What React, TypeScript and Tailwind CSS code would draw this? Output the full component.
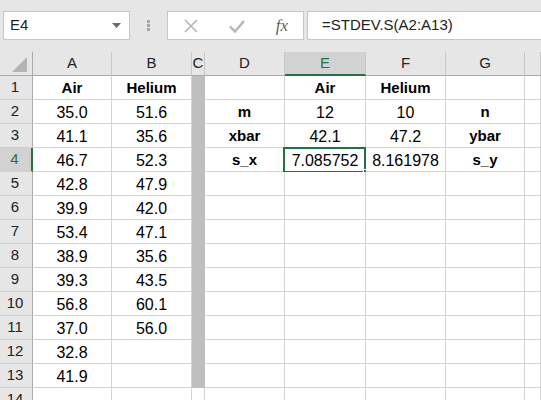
import { ReactNode } from "react";

const FONT = { fontFamily: '"Liberation Sans", Arial, sans-serif' };

type Val = string | { b: string };

// A..G for rows 1-13
const ROWS: Val[][] = [
  [{ b: "Air" }, { b: "Helium" }, "", "", { b: "Air" }, { b: "Helium" }, ""],
  ["35.0", "51.6", "", { b: "m" }, "12", "10", { b: "n" }],
  ["41.1", "35.6", "", { b: "xbar" }, "42.1", "47.2", { b: "ybar" }],
  ["46.7", "52.3", "", { b: "s_x" }, "7.085752", "8.161978", { b: "s_y" }],
  ["42.8", "47.9", "", "", "", "", ""],
  ["39.9", "42.0", "", "", "", "", ""],
  ["53.4", "47.1", "", "", "", "", ""],
  ["38.9", "35.6", "", "", "", "", ""],
  ["39.3", "43.5", "", "", "", "", ""],
  ["56.8", "60.1", "", "", "", "", ""],
  ["37.0", "56.0", "", "", "", "", ""],
  ["32.8", "", "", "", "", "", ""],
  ["41.9", "", "", "", "", "", ""],
];

const LETTERS = ["A", "B", "C", "D", "E", "F", "G", ""];

function ColHeader({ letter }: { letter: string }) {
  const selected = letter === "E";
  return (
    <div
      className={`h-[24px] flex items-center justify-center overflow-hidden text-[15px] border-r ${
        selected
          ? "bg-[#d2d2d2] text-[#217346] border-r-[#c8c8c8] border-b-2 border-b-[#217346]"
          : "bg-[#e6e6e6] text-[#222] border-r-[#c8c8c8] border-b border-b-[#ababab]"
      }`}
    >
      {letter}
    </div>
  );
}

function RowHeader({ n }: { n: number }) {
  const selected = n === 4;
  return (
    <div
      className={`h-[24px] flex items-center justify-center pr-[2px] text-[15px] border-b border-b-[#d0d0d0] ${
        selected
          ? "bg-[#d2d2d2] text-[#217346] border-r-2 border-r-[#217346]"
          : "bg-[#e6e6e6] text-[#222] border-r border-r-[#ababab]"
      }`}
    >
      {n}
    </div>
  );
}

function Cell({ v, gray, active }: { v: Val; gray?: boolean; active?: boolean }) {
  const bold = typeof v !== "string";
  const text = typeof v === "string" ? v : v.b;
  return (
    <div
      className={`relative h-[24px] flex items-center justify-center pt-[2px] border-r border-b whitespace-nowrap ${
        gray ? "bg-[#bfbfbf] border-[#bfbfbf]" : "bg-white border-[#d4d4d4]"
      } ${bold ? "font-bold text-[15px]" : "text-[16px]"} text-black`}
    >
      {text}
      {active && (
        <>
          <div className="absolute left-[-2px] top-[-1px] w-[83px] h-[26px] border-2 border-[#217346]" />
          <div className="absolute right-[-4px] bottom-[-4px] w-[6px] h-[6px] bg-[#217346] border border-white" />
        </>
      )}
    </div>
  );
}

function ToolBox({ children, className }: { children: ReactNode; className: string }) {
  return (
    <div className={`h-[29px] bg-white border border-[#c6c6c6] flex items-center ${className}`}>
      {children}
    </div>
  );
}

export default function App() {
  return (
    <div className="w-[541px] h-[400px] overflow-hidden bg-[#e6e6e6] select-none" style={FONT}>
      {/* name box + formula bar */}
      <div className="h-[52px] flex items-start pt-[11px] pl-[3px]">
        <ToolBox className="w-[127px] justify-between pl-[6px] pr-[8px]">
          <span className="text-[15px] text-[#222]">E4</span>
          <svg width="9" height="5" viewBox="0 0 9 5">
            <path d="M0 0h9L4.5 5z" fill="#6b6b6b" />
          </svg>
        </ToolBox>
        <div className="w-[37px] h-[29px] flex flex-col items-center justify-center gap-[1px]">
          <span className="w-[3px] h-[3px] bg-[#a6a6a6]" />
          <span className="w-[3px] h-[3px] bg-[#a6a6a6]" />
          <span className="w-[3px] h-[3px] bg-[#a6a6a6]" />
        </div>
        <ToolBox className="w-[137px] justify-between pl-[15px] pr-[15px]">
          <svg width="16" height="16" viewBox="0 0 16 16">
            <path d="M2 2L14 14M14 2L2 14" stroke="#b5b5b5" strokeWidth="1.6" />
          </svg>
          <svg width="18" height="16" viewBox="0 0 18 16">
            <path d="M2 8.5L7 13.5L16 3" stroke="#b5b5b5" strokeWidth="2.4" fill="none" />
          </svg>
          <span
            className="text-[17px] italic text-[#5f5f5f] leading-none"
            style={{ fontFamily: '"Liberation Serif", "Times New Roman", serif' }}
          >
            fx
          </span>
        </ToolBox>
        <ToolBox className="flex-1 ml-[3px] border-r-0 pl-[14px]">
          <span className="text-[15px] text-[#222]">=STDEV.S(A2:A13)</span>
        </ToolBox>
      </div>

      {/* sheet grid */}
      <div className="grid grid-cols-[33px_79px_80px_13px_80px_81px_80px_79px_1fr]">
        <div className="h-[24px] bg-[#e6e6e6] border-r border-r-[#ababab] border-b border-b-[#ababab] flex items-end justify-end pr-[5px] pb-[3px]">
          <svg width="15" height="15" viewBox="0 0 15 15">
            <path d="M15 0V15H0z" fill="#b4b4b4" />
          </svg>
        </div>
        {LETTERS.map((l, i) => (
          <ColHeader key={i} letter={l} />
        ))}

        {ROWS.map((row, r) => (
          <div key={r} className="contents">
            <RowHeader n={r + 1} />
            {row.map((v, c) => (
              <Cell key={c} v={v} gray={c === 2} active={r === 3 && c === 4} />
            ))}
            <Cell v="" />
          </div>
        ))}

        <RowHeader n={14} />
        {LETTERS.map((_, i) => (
          <Cell key={i} v="" />
        ))}
      </div>
    </div>
  );
}
